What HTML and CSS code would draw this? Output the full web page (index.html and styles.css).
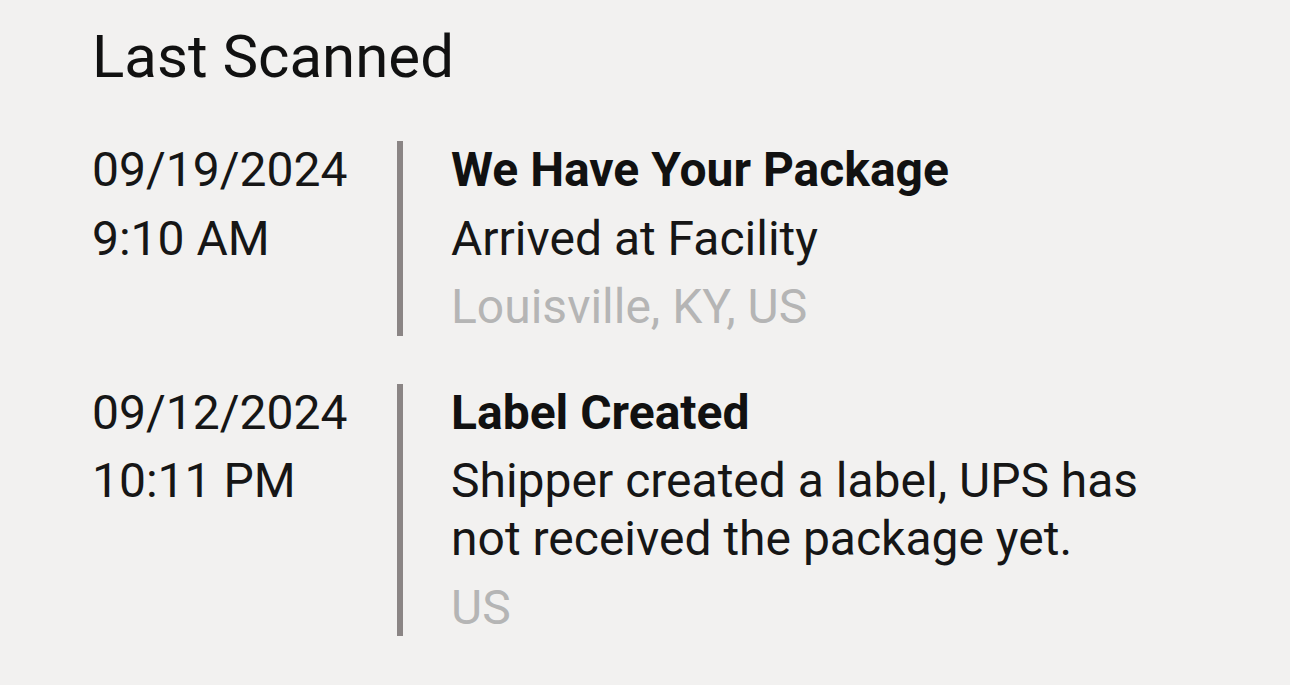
FILE: index.html
```html
<!DOCTYPE html>
<html lang="en">
<head>
    <meta charset="UTF-8">
    <meta name="viewport" content="width=device-width, initial-scale=1.0">
    <title>Last Scanned</title>
    <link rel="stylesheet" href="styles.css">
</head>
<body>

<div class="container">
    <h1>Last Scanned</h1>

    <div class="scan-list">
        <!-- Scan terbaru -->
        <div class="scan-item">
            <div class="scan-date">
                <div class="line">09/19/2024</div>
                <div class="line">9:10 AM</div>
            </div>
            <div class="scan-detail">
                <div class="line status">We Have Your Package</div>
                <div class="line">Arrived at Facility</div>
                <div class="line location">Louisville, KY, US</div>
            </div>
        </div>

        <div class="scan-item">
            <div class="scan-date">
                <div class="line">09/12/2024</div>
                <div class="line">10:11 PM</div>
            </div>
            <div class="scan-detail">
                <div class="line status">Label Created</div>
                <div class="line">Shipper created a label, UPS has not received the package yet.</div>
                <div class="line location">US</div>
            </div>
        </div>
    </div>
</div>

</body>
</html>
```

FILE: styles.css
```css
* {
    padding: 0;
    margin: 0;
    box-sizing: border-box;
}

body {
    font-family: Roboto, "Liberation Sans", sans-serif;
    background-color: #f2f1f0;
    color: #161616;
}

.container {
    padding: 21px 92px 0 92px;
}

h1 {
    font-size: 60px;
    font-weight: 400;
    line-height: 1.2;
    color: #111;
    margin-bottom: 48px;
}

.scan-list {
    display: flex;
    flex-direction: column;
    gap: 48px;
}

.scan-item {
    display: grid;
    grid-template-columns: 305px 1fr;
    font-size: 48px;
    line-height: 1.2;
}

.scan-date,
.scan-detail {
    display: flex;
    flex-direction: column;
    gap: 11px;
}

.scan-detail {
    border-left: 6px solid #8b8585;
    padding-left: 48px;
}

.status {
    font-weight: 700;
    color: #111;
}

.location {
    color: #b5b5b5;
}
```
